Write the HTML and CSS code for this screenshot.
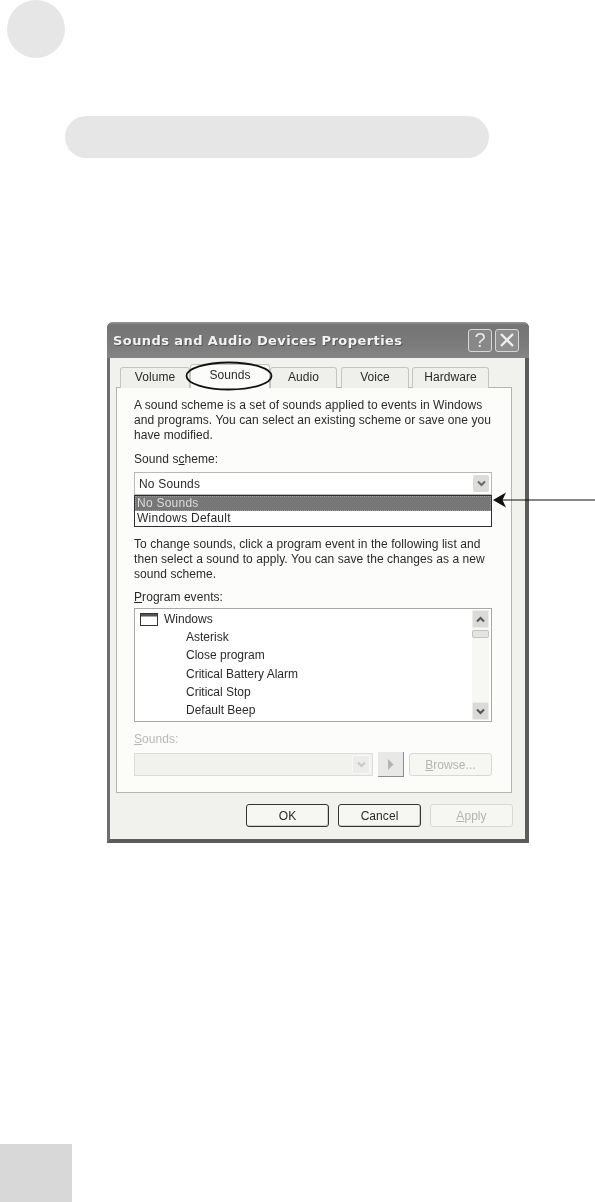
FILE: index.html
```html
<!DOCTYPE html>
<html lang="en">
<head>
    <meta charset="UTF-8">
    <meta name="viewport" content="width=device-width, initial-scale=1.0">
    <title>Sounds and Audio Devices Properties</title>
    <link rel="stylesheet" href="styles.css">
</head>
<body>
    <div class="page">
        <div class="step-dot"></div>
        <div class="heading-pill"></div>

        <div class="dialog">
            <div class="titlebar">
                <span class="title">Sounds and Audio Devices Properties</span>
                <span class="title-btn">?</span>
                <span class="title-btn title-close">
                    <svg width="16" height="16" viewBox="0 0 16 16"><path d="M2 2 L14 14 M14 2 L2 14" stroke="#eee" stroke-width="2.4"/></svg>
                </span>
            </div>

            <div class="tabs">
                <div class="tab tab-volume">Volume</div>
                <div class="tab tab-active">Sounds</div>
                <div class="tab tab-audio">Audio</div>
                <div class="tab tab-voice">Voice</div>
                <div class="tab tab-hardware">Hardware</div>
            </div>

            <div class="panel">
                <p class="text">A sound scheme is a set of sounds applied to events in Windows<br>and programs. You can select an existing scheme or save one you<br>have modified.</p>

                <div class="label label-scheme">Sound s<u>c</u>heme:</div>
                <div class="combo">
                    <span class="combo-value">No Sounds</span>
                    <span class="arrow-btn">
                        <svg width="9" height="7" viewBox="0 0 9 7"><path d="M1 1.5 L4.5 5 L8 1.5" fill="none" stroke="#6a6a6a" stroke-width="2"/></svg>
                    </span>
                </div>
                <div class="dropdown">
                    <div class="dropdown-item dropdown-selected">No Sounds</div>
                    <div class="dropdown-item">Windows Default</div>
                </div>

                <p class="text text-second">To change sounds, click a program event in the following list and<br>then select a sound to apply. You can save the changes as a new<br>sound scheme.</p>

                <div class="label label-events"><u>P</u>rogram events:</div>
                <div class="events">
                    <div class="events-list">
                        <div class="event event-group">
                            <svg class="window-icon" width="18" height="13" viewBox="0 0 18 13"><rect x="0.5" y="0.5" width="17" height="12" fill="#fff" stroke="#333"/><rect x="1" y="1" width="16" height="2.5" fill="#555"/></svg>
                            Windows
                        </div>
                        <div class="event">Asterisk</div>
                        <div class="event">Close program</div>
                        <div class="event">Critical Battery Alarm</div>
                        <div class="event">Critical Stop</div>
                        <div class="event">Default Beep</div>
                    </div>
                    <div class="scrollbar">
                        <span class="scroll-btn">
                            <svg width="9" height="7" viewBox="0 0 9 7"><path d="M1 5.5 L4.5 2 L8 5.5" fill="none" stroke="#555" stroke-width="2"/></svg>
                        </span>
                        <span class="scroll-thumb"></span>
                        <span class="scroll-btn scroll-down">
                            <svg width="9" height="7" viewBox="0 0 9 7"><path d="M1 1.5 L4.5 5 L8 1.5" fill="none" stroke="#555" stroke-width="2"/></svg>
                        </span>
                    </div>
                </div>

                <div class="label label-sounds disabled"><u>S</u>ounds:</div>
                <div class="sound-row">
                    <div class="combo combo-disabled">
                        <span class="arrow-btn">
                            <svg width="9" height="7" viewBox="0 0 9 7"><path d="M1 1.5 L4.5 5 L8 1.5" fill="none" stroke="#c8c8c8" stroke-width="2"/></svg>
                        </span>
                    </div>
                    <span class="play-btn">
                        <svg width="7" height="11" viewBox="0 0 7 11"><path d="M1 0 L6.5 5.5 L1 11 Z" fill="#b4b4b4"/></svg>
                    </span>
                    <span class="btn btn-disabled btn-browse"><span><u>B</u>rowse...</span></span>
                </div>
            </div>

            <div class="actions">
                <span class="btn">OK</span>
                <span class="btn">Cancel</span>
                <span class="btn btn-disabled"><span><u>A</u>pply</span></span>
            </div>

            <svg class="callout-ring" width="88" height="30" viewBox="0 0 88 30"><ellipse cx="44" cy="15" rx="42.5" ry="13.5" fill="none" stroke="#111" stroke-width="1.8"/></svg>
        </div>

        <svg class="callout-arrow" width="103" height="17" viewBox="0 0 103 17"><path d="M9 8 H103" stroke="#111" stroke-width="1.2"/><path d="M0 8 L13 0.5 L9.5 8 L13 15.5 Z" fill="#111"/></svg>

        <div class="page-tab"></div>
    </div>
</body>
</html>
```

FILE: styles.css
```css
body {
    margin: 0;
    padding: 0;
    background-color: #fff;
    font-family: "Liberation Sans", Arial, sans-serif;
    color: #2a2a2a;
}
.page {
    position: relative;
    height: 1202px;
    overflow: hidden;
}
.step-dot {
    width: 58px;
    height: 58px;
    margin-left: 7px;
    border-radius: 50%;
    background-color: #e6e6e6;
}
.heading-pill {
    width: 424px;
    height: 42px;
    margin: 58px 0 0 65px;
    border-radius: 21px;
    background-color: #e6e6e6;
}
.page-tab {
    width: 72px;
    height: 58px;
    margin-top: 301px;
    background-color: #d8d8d8;
}

/* dialog window */
.dialog {
    position: relative;
    box-sizing: border-box;
    width: 422px;
    height: 521px;
    margin: 164px 0 0 107px;
    background-color: #f1f1ed;
    border-left: 3px solid #6e6e6e;
    border-right: 4px solid #5c5c5c;
    border-bottom: 4px solid #5c5c5c;
    border-radius: 6px 6px 0 0;
    font-size: 12px;
    letter-spacing: 0.065px;
    filter: blur(0.6px);
}
.titlebar {
    display: flex;
    align-items: center;
    gap: 3px;
    height: 36px;
    margin-left: -3px;
    margin-right: -4px;
    padding: 0 10px 0 6px;
    box-sizing: border-box;
    background: linear-gradient(#9a9a9a 0, #747474 3px, #7c7c7c 24px, #868686 100%);
    border-radius: 6px 6px 0 0;
}
.title {
    flex: 1;
    color: #f2f2f2;
    font-family: "DejaVu Sans", sans-serif;
    font-size: 13px;
    font-weight: bold;
    letter-spacing: 0.42px;
    text-shadow: 1px 1px 0 #555;
}
.title-btn {
    display: flex;
    justify-content: center;
    align-items: center;
    box-sizing: border-box;
    width: 24px;
    height: 23px;
    border: 1px solid #d8d8d8;
    border-radius: 3px;
    background-color: #888;
    color: #e8e8e8;
    font-size: 20px;
}
.title-close {
    background-color: #8e8e8e;
}

/* tabs */
.tabs {
    display: flex;
    align-items: flex-end;
    height: 22px;
    margin-top: 8px;
    padding-left: 10px;
    position: relative;
    z-index: 1;
}
.tab {
    box-sizing: border-box;
    height: 21px;
    padding-top: 2px;
    border: 1px solid #c4c4c0;
    border-bottom: none;
    border-radius: 3px 3px 0 0;
    background-color: #efefeb;
    text-align: center;
}
.tab-volume {
    width: 70px;
}
.tab-active {
    width: 80px;
    height: 24px;
    padding-top: 3px;
    background-color: #fcfcfb;
}
.tab-audio {
    width: 67px;
    margin-right: 4px;
}
.tab-voice {
    width: 68px;
    margin-right: 3px;
}
.tab-hardware {
    width: 77px;
}

/* tab page */
.panel {
    box-sizing: border-box;
    height: 406px;
    margin: -1px 13px 0 6px;
    padding: 10px 19px 0 17px;
    border: 1px solid #b4b4b0;
    background-color: #fcfcfb;
}
.text {
    margin: 0;
    line-height: 15px;
    white-space: nowrap;
}
.text-second {
    margin-top: 10px;
}
.label {
    line-height: 15px;
}
.label-scheme {
    margin-top: 9px;
}
.label-events {
    margin-top: 8px;
}
.label-sounds {
    margin-top: 10px;
}
.disabled {
    color: #b8b8b8;
}
.combo {
    display: flex;
    align-items: center;
    box-sizing: border-box;
    height: 23px;
    margin-top: 5px;
    padding: 0 2px 0 4px;
    border: 1px solid #b8b8b4;
    background-color: #fff;
}
.combo-value {
    flex: 1;
    letter-spacing: 0.2px;
}
.arrow-btn {
    display: flex;
    justify-content: center;
    align-items: center;
    width: 16px;
    height: 17px;
    border-radius: 2px;
    background-color: #dcdcda;
}
.dropdown {
    box-sizing: border-box;
    height: 32px;
    border: 1px solid #2e2e2e;
    background-color: #fff;
}
.dropdown-item {
    height: 15px;
    line-height: 15px;
    padding-left: 2px;
    letter-spacing: 0.25px;
}
.dropdown-selected {
    background-color: #777;
    color: #dcdcdc;
    outline: 1px dotted #9c9c9c;
    outline-offset: -1px;
}

/* program events */
.events {
    display: flex;
    box-sizing: border-box;
    height: 114px;
    margin-top: 3px;
    padding: 1px 2px 1px 0;
    border: 1px solid #a8a8a4;
    background-color: #fff;
}
.events-list {
    flex: 1;
}
.event {
    height: 18.2px;
    line-height: 18px;
    padding-left: 51px;
    letter-spacing: 0;
    white-space: nowrap;
}
.event-group {
    display: flex;
    align-items: center;
    gap: 6px;
    padding-left: 5px;
}
.scrollbar {
    display: flex;
    flex-direction: column;
    width: 17px;
    background-color: #f7f7f4;
}
.scroll-btn {
    display: flex;
    justify-content: center;
    align-items: center;
    height: 18px;
    border: 1px solid #ececea;
    box-sizing: border-box;
    border-radius: 2px;
    background-color: #dadad8;
}
.scroll-thumb {
    box-sizing: border-box;
    height: 8px;
    margin-top: 2px;
    border: 1px solid #c4c4c2;
    border-radius: 2px;
    background-color: #e4e4e2;
}
.scroll-down {
    margin-top: auto;
}

/* sounds row */
.sound-row {
    display: flex;
    align-items: center;
    height: 25px;
    margin-top: 5px;
}
.combo-disabled {
    justify-content: flex-end;
    width: 239px;
    margin-top: 0;
    border-color: #dcdcd8;
    background-color: #f1f1ed;
}
.combo-disabled .arrow-btn {
    background-color: #ececea;
    border: 1px solid #f8f8f8;
}
.play-btn {
    display: flex;
    justify-content: center;
    align-items: center;
    box-sizing: border-box;
    width: 26px;
    height: 25px;
    margin: 0 5px;
    border-right: 1px solid #8c8c8c;
    border-bottom: 1px solid #8c8c8c;
    background-color: #e8e8e6;
}
.btn {
    display: flex;
    justify-content: center;
    align-items: center;
    box-sizing: border-box;
    width: 83px;
    height: 23px;
    border: 1px solid #333;
    border-radius: 3px;
    background-color: #f6f6f3;
    box-shadow: inset -1px -1px 0 #cfcfca;
}
.btn-disabled {
    border-color: #d8d8d4;
    color: #b4b4b4;
    box-shadow: none;
}
.btn-browse {
    margin-left: auto;
}

/* bottom buttons */
.actions {
    display: flex;
    justify-content: flex-end;
    gap: 9px;
    margin-top: 11px;
    padding-right: 12px;
}

/* hand-drawn callouts over the screenshot */
.callout-ring {
    position: absolute;
    left: 75px;
    top: 39px;
    z-index: 2;
}
.callout-arrow {
    position: absolute;
    left: 493px;
    top: 492px;
    filter: blur(0.3px);
}
```
